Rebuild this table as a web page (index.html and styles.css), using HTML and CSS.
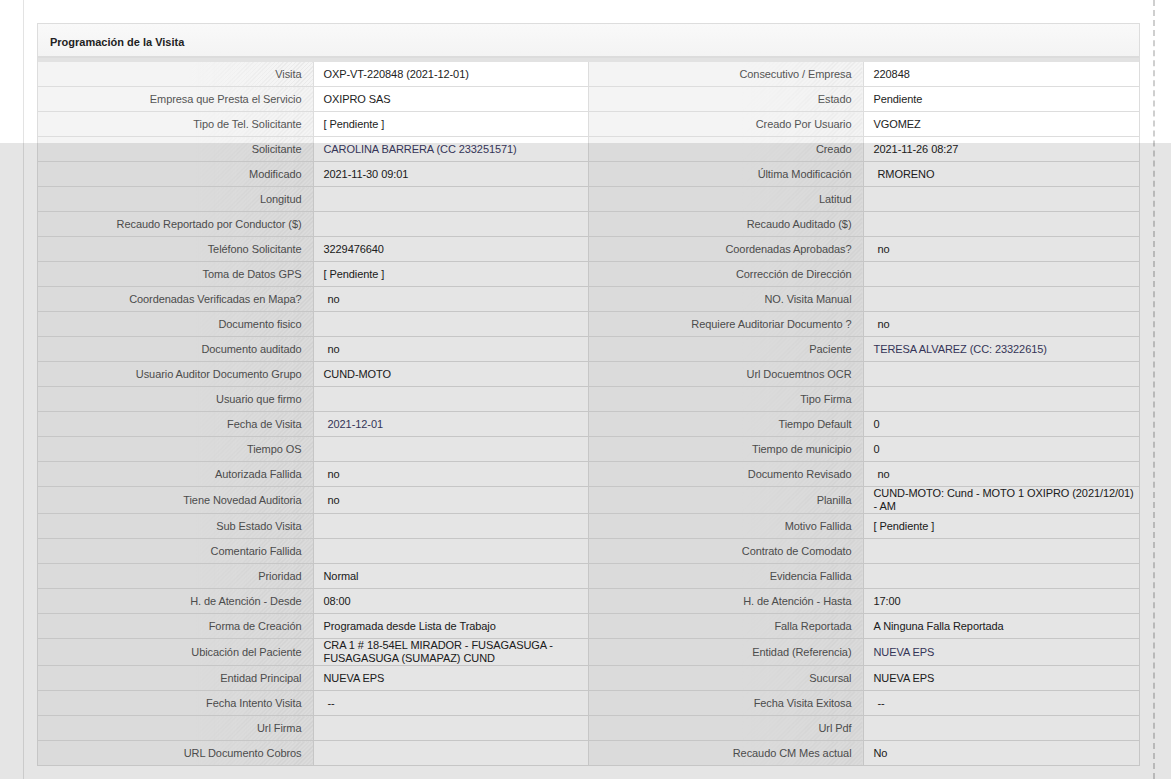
FILE: index.html
```html
<!DOCTYPE html>
<html lang="es">
<head>
<meta charset="utf-8">
<title>Programación de la Visita</title>
<link rel="stylesheet" href="styles.css">
</head>
<body>
<div class="page">
  <div class="content">
    <div class="panel">
      <div class="panel-head">Programación de la Visita</div>
      <table class="grid">
        <colgroup><col class="c1"><col class="c2"><col class="c3"><col class="c4"></colgroup>
        <tr><th>Visita</th><td>OXP-VT-220848 (2021-12-01)</td><th>Consecutivo / Empresa</th><td>220848</td></tr>
        <tr><th>Empresa que Presta el Servicio</th><td>OXIPRO SAS</td><th>Estado</th><td>Pendiente</td></tr>
        <tr><th>Tipo de Tel. Solicitante</th><td>[ Pendiente ]</td><th>Creado Por Usuario</th><td>VGOMEZ</td></tr>
        <tr><th>Solicitante</th><td class="link">CAROLINA BARRERA (CC 233251571)</td><th>Creado</th><td>2021-11-26 08:27</td></tr>
        <tr><th>Modificado</th><td>2021-11-30 09:01</td><th>Última Modificación</th><td class="sp">RMORENO</td></tr>
        <tr><th>Longitud</th><td></td><th>Latitud</th><td></td></tr>
        <tr><th>Recaudo Reportado por Conductor ($)</th><td></td><th>Recaudo Auditado ($)</th><td></td></tr>
        <tr><th>Teléfono Solicitante</th><td>3229476640</td><th>Coordenadas Aprobadas?</th><td class="sp">no</td></tr>
        <tr><th>Toma de Datos GPS</th><td>[ Pendiente ]</td><th>Corrección de Dirección</th><td></td></tr>
        <tr><th>Coordenadas Verificadas en Mapa?</th><td class="sp">no</td><th>NO. Visita Manual</th><td></td></tr>
        <tr><th>Documento fisico</th><td></td><th>Requiere Auditoriar Documento ?</th><td class="sp">no</td></tr>
        <tr><th>Documento auditado</th><td class="sp">no</td><th>Paciente</th><td class="link">TERESA ALVAREZ (CC: 23322615)</td></tr>
        <tr><th>Usuario Auditor Documento Grupo</th><td>CUND-MOTO</td><th>Url Docuemtnos OCR</th><td></td></tr>
        <tr><th>Usuario que firmo</th><td></td><th>Tipo Firma</th><td></td></tr>
        <tr><th>Fecha de Visita</th><td class="sp link">2021-12-01</td><th>Tiempo Default</th><td>0</td></tr>
        <tr><th>Tiempo OS</th><td></td><th>Tiempo de municipio</th><td>0</td></tr>
        <tr><th>Autorizada Fallida</th><td class="sp">no</td><th>Documento Revisado</th><td class="sp">no</td></tr>
        <tr><th>Tiene Novedad Auditoria</th><td class="sp">no</td><th>Planilla</th><td>CUND-MOTO: Cund - MOTO 1 OXIPRO (2021/12/01) - AM</td></tr>
        <tr><th>Sub Estado Visita</th><td></td><th>Motivo Fallida</th><td>[ Pendiente ]</td></tr>
        <tr><th>Comentario Fallida</th><td></td><th>Contrato de Comodato</th><td></td></tr>
        <tr><th>Prioridad</th><td>Normal</td><th>Evidencia Fallida</th><td></td></tr>
        <tr><th>H. de Atención - Desde</th><td>08:00</td><th>H. de Atención - Hasta</th><td>17:00</td></tr>
        <tr><th>Forma de Creación</th><td>Programada desde Lista de Trabajo</td><th>Falla Reportada</th><td>A Ninguna Falla Reportada</td></tr>
        <tr><th>Ubicación del Paciente</th><td>CRA 1 # 18-54EL MIRADOR - FUSAGASUGA - FUSAGASUGA (SUMAPAZ) CUND</td><th>Entidad (Referencia)</th><td class="link">NUEVA EPS</td></tr>
        <tr><th>Entidad Principal</th><td>NUEVA EPS</td><th>Sucursal</th><td>NUEVA EPS</td></tr>
        <tr><th>Fecha Intento Visita</th><td class="sp">--</td><th>Fecha Visita Exitosa</th><td class="sp">--</td></tr>
        <tr><th>Url Firma</th><td></td><th>Url Pdf</th><td></td></tr>
        <tr><th>URL Documento Cobros</th><td></td><th>Recaudo CM Mes actual</th><td>No</td></tr>
      </table>
    </div>
  </div>
</div>
<div class="overlay"></div>
</body>
</html>
```

FILE: styles.css
```css
html, body {
  margin: 0;
  padding: 0;
  background: #ffffff;
  font-family: "Liberation Sans", Arial, sans-serif;
  font-size: 11px;
}

.page {
  margin-left: 23px;
  width: 1132px;
  min-height: 779px;
  border-left: 1px solid #e3e3e3;
  border-right: 2px dashed #cfcfcf;
  box-sizing: border-box;
}

.content {
  padding: 23px 0 0 13px;
}

.panel {
  width: 1103px;
  border: 1px solid #dddddd;
  box-sizing: border-box;
  background: #ffffff;
}

.panel-head {
  height: 34px;
  line-height: 37px;
  padding-left: 12px;
  font-weight: bold;
  color: #222222;
  background: linear-gradient(#f9f9f9, #f3f3f3);
  border-bottom: 4px solid #e2e2e2;
  box-shadow: inset 0 -2px 0 #dcdcdc;
}

.grid {
  width: 100%;
  border-collapse: collapse;
  table-layout: fixed;
  letter-spacing: -0.08px;
}

.grid col.c1, .grid col.c2, .grid col.c3 { width: 275px; }

.grid tr:first-child th, .grid tr:first-child td { border-top: 0; }

.grid th, .grid td {
  height: 24px;
  padding: 0 10px;
  line-height: 13px;
  border: 1px solid #dddddd;
  font-weight: normal;
  vertical-align: middle;
}

.grid th:first-child { border-left: 0; }
.grid td:last-child { border-right: 0; }
.grid tr:last-child th, .grid tr:last-child td { border-bottom: 0; }

.grid th {
  text-align: right;
  color: #555555;
  padding-right: 11px;
  background:
    linear-gradient(to right, #f4f4f4 0%, #f4f4f4 55%, rgba(244,244,244,0.3) 100%),
    repeating-linear-gradient(135deg, #f4f4f4 0px, #f4f4f4 2px, #e4e4e4 2px, #e4e4e4 3px);
}

.grid td {
  text-align: left;
  color: #222222;
  background: #ffffff;
  padding-right: 2px;
}

.grid td.sp { padding-left: 14px; }
.grid td.link { color: #3b3b62; }

.overlay {
  position: fixed;
  left: 0;
  right: 0;
  top: 143px;
  bottom: 0;
  background: rgba(0, 0, 0, 0.1);
}
```
